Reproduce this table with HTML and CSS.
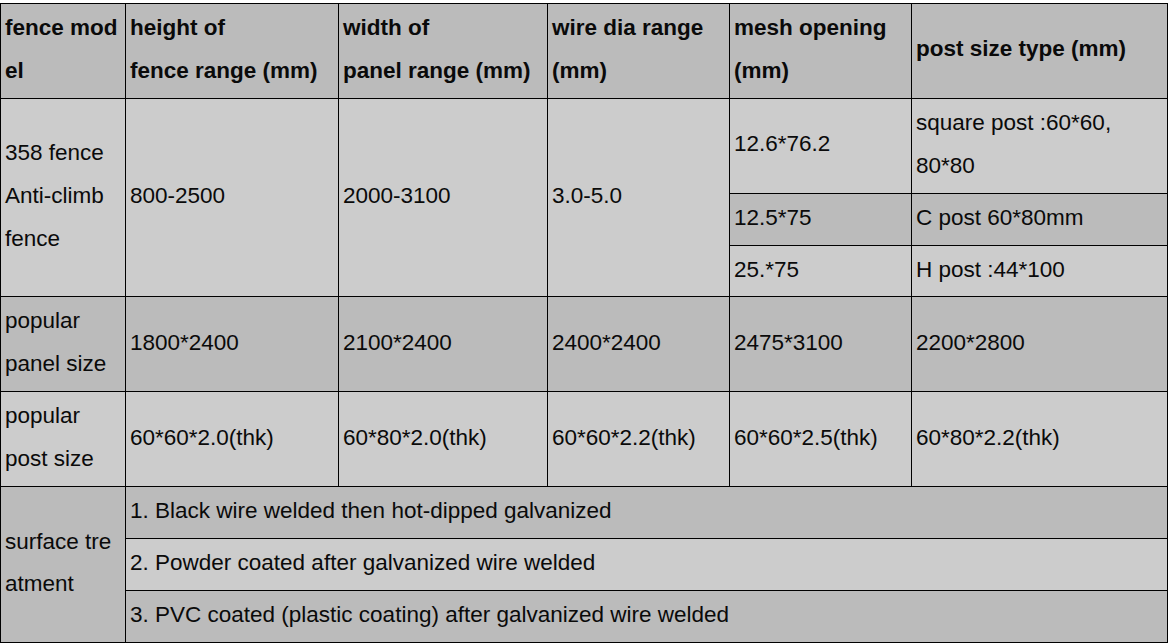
FILE: index.html
```html
<!DOCTYPE html>
<html>
<head>
<meta charset="utf-8">
<link rel="stylesheet" href="styles.css">
</head>
<body>
<table class="spec">
  <colgroup>
    <col class="c1"><col class="c2"><col class="c3"><col class="c4"><col class="c5"><col class="c6">
  </colgroup>
  <tr class="dark">
    <th>fence mod<br>el</th>
    <th>height of<br>fence range (mm)</th>
    <th>width of<br>panel range (mm)</th>
    <th>wire dia range<br>(mm)</th>
    <th>mesh opening<br>(mm)</th>
    <th>post size type (mm)</th>
  </tr>
  <tr class="light">
    <td rowspan="3">358 fence<br>Anti-climb<br>fence</td>
    <td rowspan="3">800-2500</td>
    <td rowspan="3">2000-3100</td>
    <td rowspan="3">3.0-5.0</td>
    <td>12.6*76.2</td>
    <td>square post :60*60,<br>80*80</td>
  </tr>
  <tr class="dark">
    <td>12.5*75</td>
    <td>C post 60*80mm</td>
  </tr>
  <tr class="light">
    <td>25.*75</td>
    <td>H post :44*100</td>
  </tr>
  <tr class="dark">
    <td>popular<br>panel size</td>
    <td>1800*2400</td>
    <td>2100*2400</td>
    <td>2400*2400</td>
    <td>2475*3100</td>
    <td>2200*2800</td>
  </tr>
  <tr class="light">
    <td>popular<br>post size</td>
    <td>60*60*2.0(thk)</td>
    <td>60*80*2.0(thk)</td>
    <td>60*60*2.2(thk)</td>
    <td>60*60*2.5(thk)</td>
    <td>60*80*2.2(thk)</td>
  </tr>
  <tr class="dark">
    <td rowspan="3">surface tre<br>atment</td>
    <td colspan="5">1. Black wire welded then hot-dipped galvanized</td>
  </tr>
  <tr class="light">
    <td colspan="5">2. Powder coated after galvanized wire welded</td>
  </tr>
  <tr class="dark">
    <td colspan="5">3. PVC coated (plastic coating) after galvanized wire welded</td>
  </tr>
</table>
</body>
</html>
```

FILE: styles.css
```css
html, body {
  margin: 0;
  padding: 0;
  background: #ffffff;
}
body {
  padding-top: 3px;
  font-family: "Liberation Sans", Arial, sans-serif;
  font-size: 22.5px;
  color: #0a0a0a;
}
.spec {
  border-collapse: collapse;
  table-layout: fixed;
  width: 1167px;
}
.c1 { width: 125px; }
.c2 { width: 213px; }
.c3 { width: 209px; }
.c4 { width: 182px; }
.c5 { width: 182px; }
.c6 { width: 256px; }
.spec th, .spec td {
  border: 1px solid #000000;
  padding: 3px 4px 5px 4px;
  line-height: 42.9px;
  text-align: left;
  vertical-align: middle;
  white-space: nowrap;
  overflow: hidden;
}
.spec th {
  font-weight: bold;
}
.dark { background: #bbbbbb; }
.light { background: #cccccc; }
```
